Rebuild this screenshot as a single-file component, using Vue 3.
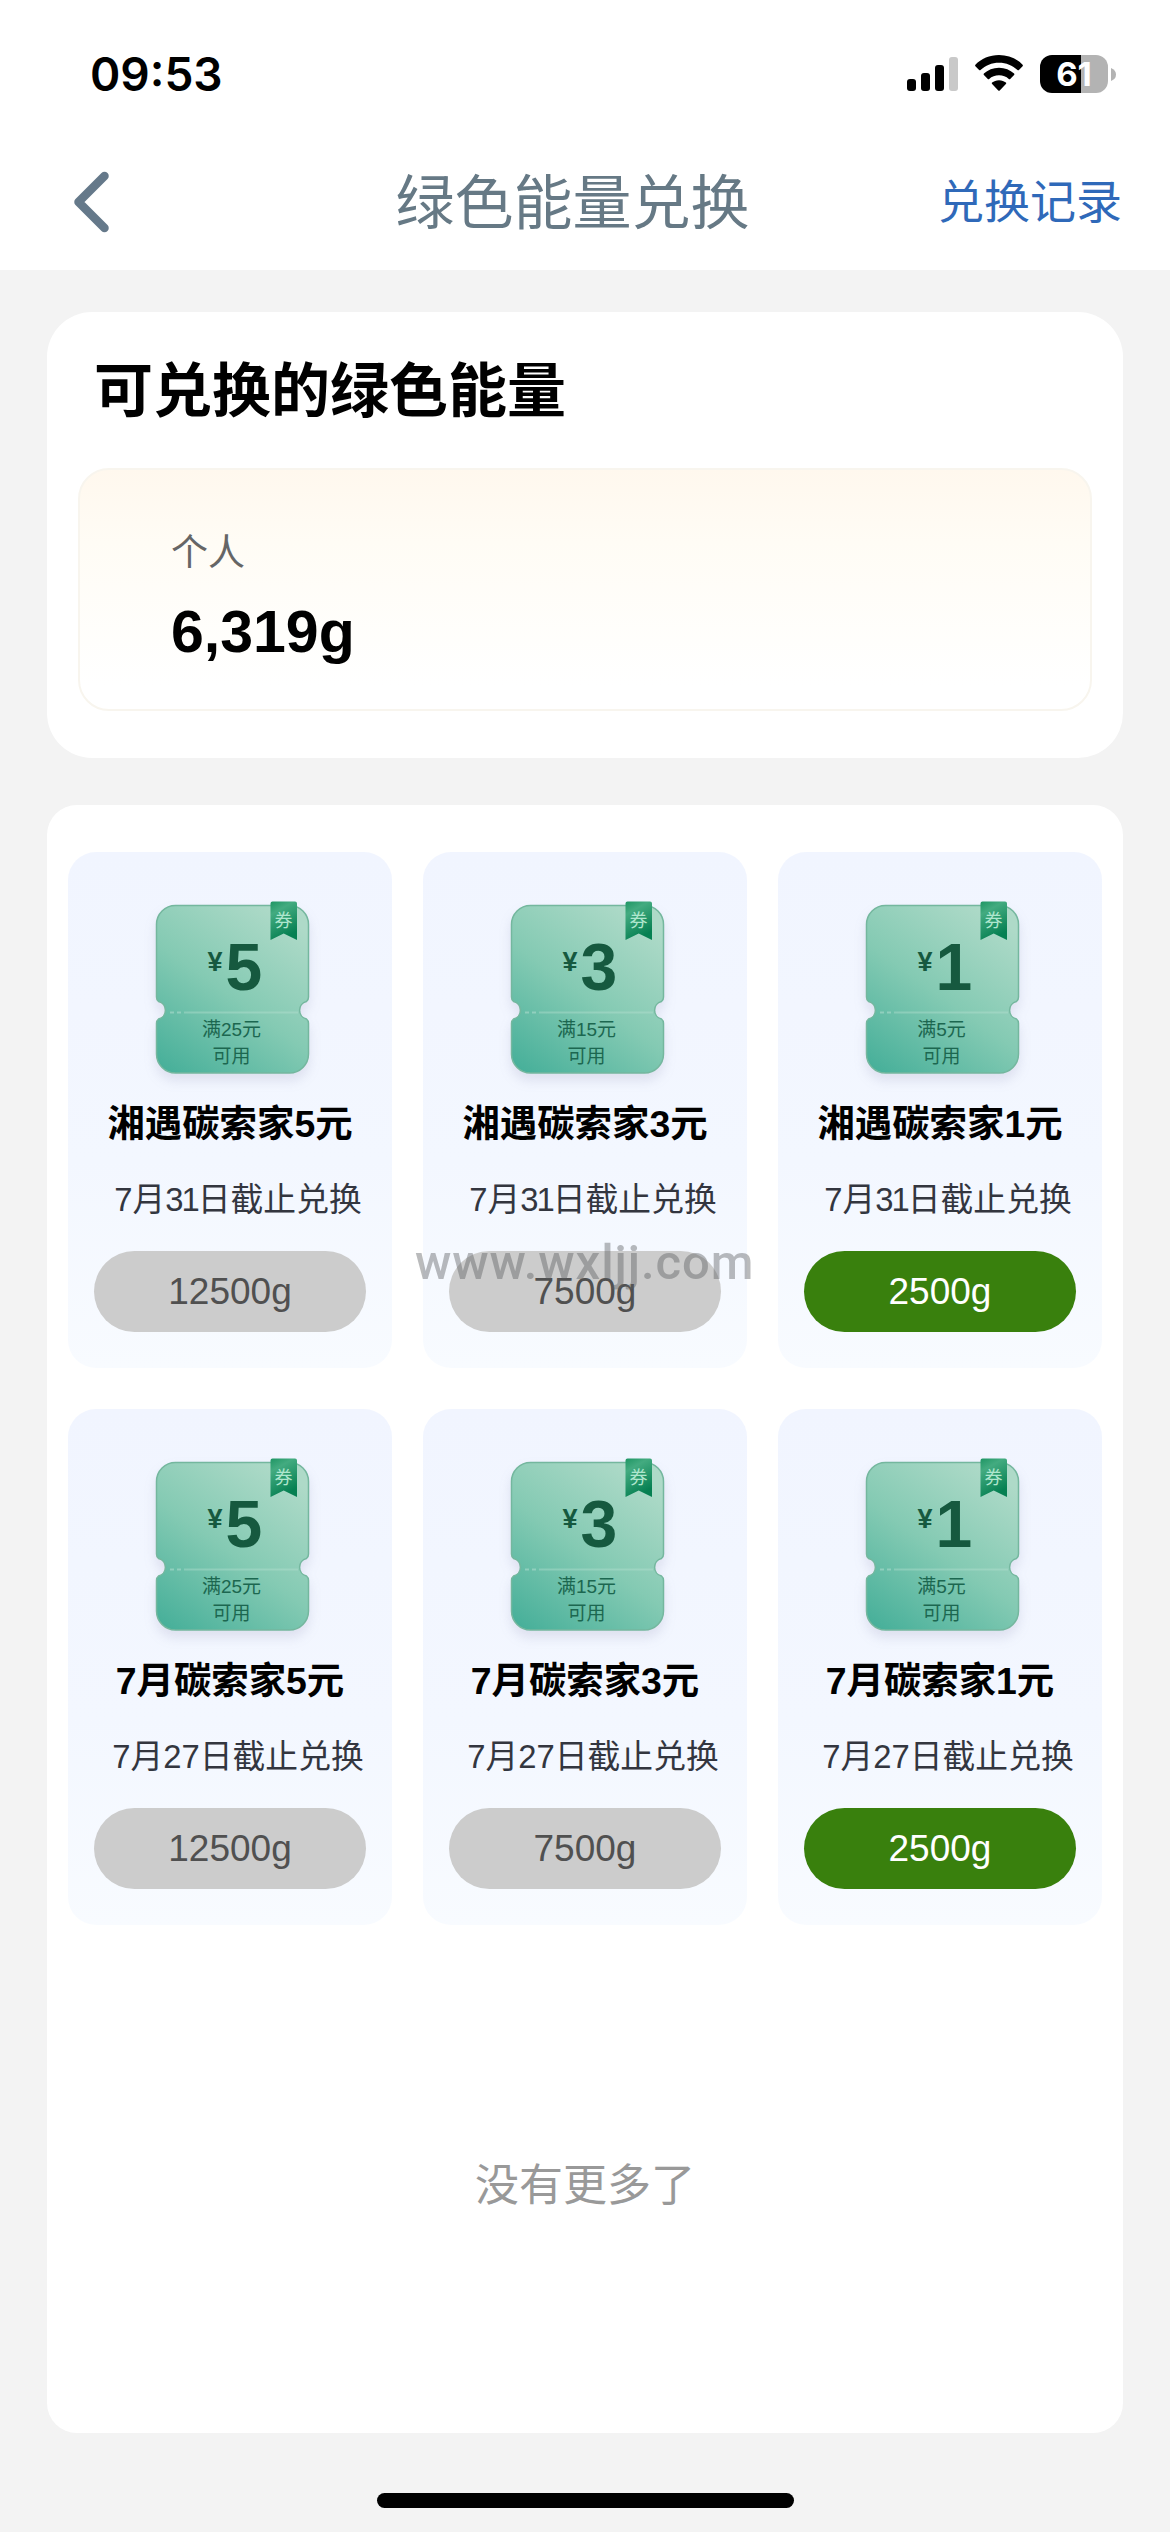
<script setup>
const coupons = [
  { name: '湘遇碳索家5元', day: '31', value: 5, min: 25, cost: 12500 },
  { name: '湘遇碳索家3元', day: '31', value: 3, min: 15, cost: 7500 },
  { name: '湘遇碳索家1元', day: '31', value: 1, min: 5, cost: 2500 },
  { name: '7月碳索家5元', day: '27', value: 5, min: 25, cost: 12500 },
  { name: '7月碳索家3元', day: '27', value: 3, min: 15, cost: 7500 },
  { name: '7月碳索家1元', day: '27', value: 1, min: 5, cost: 2500 },
]
const balance = 6319
</script>

<template>
  <div class="page">
    <header class="header">
      <div class="status">
        <span class="time">09:53</span>
        <div class="indicators">
          <svg class="signal" width="51" height="34" viewBox="0 0 51 34">
            <rect x="0" y="22" width="9" height="12" rx="3" />
            <rect x="14" y="16" width="9" height="18" rx="3" />
            <rect x="28" y="8" width="9" height="26" rx="3" />
            <rect x="42" y="0" width="9" height="34" rx="3" fill="#c9c9c9" />
          </svg>
          <svg class="wifi" width="48" height="36" viewBox="0 0 48 36">
            <path d="M24 0C33.300 0 41.800 3.700 47.600 9.700Q48.300 10.500 47.600 11.200L43.900 15Q43.200 15.600 42.500 15C37.600 10.300 31.200 7.700 24 7.700S10.400 10.300 5.500 15Q4.800 15.600 4.100 15L.4 11.200Q-.3 10.500 .4 9.700C6.200 3.700 14.700 0 24 0Z" />
            <path d="M24 12.700C29.900 12.700 35.200 14.900 39.100 18.600Q39.800 19.300 39.100 20L35.200 23.900Q34.500 24.500 33.800 23.900C31.200 21.500 27.800 20.200 24 20.200S16.800 21.500 14.200 23.900Q13.500 24.500 12.800 23.900L8.900 20Q8.200 19.300 8.900 18.600C12.800 14.900 18.100 12.700 24 12.700Z" />
            <path d="M24 25.200C26.800 25.200 29.200 26.100 30.900 27.600Q31.600 28.300 30.900 29L24.700 35.500Q24 36.200 23.300 35.500L17.100 29Q16.400 28.300 17.100 27.600C18.800 26.100 21.200 25.200 24 25.200Z" />
          </svg>
          <div class="battery">
            <div class="cell">61</div>
            <svg width="5" height="13" viewBox="0 0 5 13"><path d="M0 0Q5 2 5 6.500T0 13Z" fill="#b3b3b3" /></svg>
          </div>
        </div>
      </div>
      <nav class="nav">
        <svg class="back" width="44" height="70" viewBox="0 0 44 70">
          <path d="M35.500 9L9.500 35L35.500 61" fill="none" stroke="#65798a" stroke-width="8.500" stroke-linecap="round" stroke-linejoin="round" />
        </svg>
        <h1>绿色能量兑换</h1>
        <a>兑换记录</a>
      </nav>
    </header>

    <section class="energy">
      <h2>可兑换的绿色能量</h2>
      <div class="account">
        <span class="who">个人</span>
        <strong>{{ balance.toLocaleString('en-US') }}g</strong>
      </div>
    </section>

    <section class="list">
      <div class="grid">
        <article v-for="(c, i) in coupons" :key="i" class="coupon">
          <div class="ticket">
            <svg class="shape" width="193" height="208" viewBox="-20 -10 193 208">
              <defs>
                <linearGradient :id="'tk' + i" x1="0.1" y1="1" x2="0.75" y2="0">
                  <stop offset="0" stop-color="#48b09a" />
                  <stop offset="0.5" stop-color="#84cab3" />
                  <stop offset="1" stop-color="#aedac8" />
                </linearGradient>
                <linearGradient :id="'rb' + i" x1="0" y1="0" x2="0.4" y2="1">
                  <stop offset="0" stop-color="#1f9664" />
                  <stop offset="0.3" stop-color="#43ab80" />
                  <stop offset="1" stop-color="#068052" />
                </linearGradient>
              </defs>
              <path class="body" :fill="'url(#tk' + i + ')'" d="M19.500 .5H133.500A19 19 0 0 1 152.500 19.500V92Q152.500 95 150.500 96.500A9 9 0 0 0 150.500 114Q152.500 115.500 152.500 118.500V149A19 19 0 0 1 133.500 168H19.500A19 19 0 0 1 .5 149V118.500Q.5 115.500 2.500 114A9 9 0 0 0 2.500 96.500Q.5 95 .5 92V19.500A19 19 0 0 1 19.500 .5Z" />
              <path d="M14 107.500H26" stroke="#b9e2d3" stroke-opacity=".5" stroke-width="2" stroke-dasharray="4 3" />
              <path d="M28 107.500H142" stroke="#b9e2d3" stroke-opacity=".4" stroke-width="2" />
              <path :fill="'url(#rb' + i + ')'" d="M116.500 -3.500H139Q141 -3.500 141 -1.500V35L127.700 28.500L114.500 35V-1.500Q114.500 -3.500 116.500 -3.500Z" />
            </svg>
            <span class="mark">券</span>
            <div class="price"><small>¥</small><b>{{ c.value }}</b></div>
            <div class="rule">满{{ c.min }}元<br>可用</div>
          </div>
          <h3>{{ c.name }}</h3>
          <p class="date">7月<span :class="{ tight: c.day === '31' }">{{ c.day }}</span>日截止兑换</p>
          <button :class="{ active: c.cost <= balance }">{{ c.cost }}g</button>
        </article>
      </div>
      <p class="end">没有更多了</p>
      <span class="watermark">www.wxljj.com</span>
    </section>

    <div class="home"></div>
  </div>
</template>

<style>
body {
  margin: 0;
  background: #f3f3f3;
}
</style>

<style scoped>
.page {
  width: 1170px;
  height: 2532px;
  display: flex;
  flex-direction: column;
  overflow: hidden;
  background: #f3f3f3;
  font-family: "Liberation Sans", "Noto Sans CJK SC", sans-serif;
}
h1, h2, h3, p { margin: 0; }
svg { display: block; flex: none; }

.header {
  height: 270px;
  flex: none;
  background: #fff;
}
.status {
  height: 148px;
  display: flex;
  justify-content: space-between;
  padding: 0 54px 0 90px;
}
.time {
  font: 600 46px/149px Inter, sans-serif;
  letter-spacing: 0;
}
.indicators {
  display: flex;
  align-items: center;
  height: 148px;
}
.wifi { margin: -2px 17px 0; }
.battery {
  display: flex;
  align-items: center;
  gap: 3px;
}
.cell {
  width: 68px;
  height: 38px;
  border-radius: 12px;
  background: linear-gradient(90deg, #000 0 41px, #b3b3b3 41px);
  color: #fff;
  font: 700 33px/38px Inter, sans-serif;
  text-align: center;
}
.nav {
  height: 107px;
  display: grid;
  grid-template-columns: 320px 1fr 320px;
  align-items: center;
}
.back { margin-left: 69px; }
.nav h1 {
  width: 505px;
  padding-top: 5px;
  font-size: 59px;
  font-weight: 400;
  line-height: 102px;
  color: #667985;
  text-align: center;
}
.nav a {
  padding: 0 48px 7px 0;
  font-size: 46px;
  color: #2f69b9;
  text-align: right;
}

.energy {
  box-sizing: border-box;
  height: 446px;
  flex: none;
  margin: 42px 47px 0;
  padding: 38px 31px 0;
  border-radius: 45px;
  background: #fff;
}
.energy h2 {
  padding-left: 16px;
  font-size: 59px;
  line-height: 84px;
}
.account {
  box-sizing: border-box;
  height: 243px;
  margin-top: 34px;
  padding: 56px 0 0 91px;
  border: 2px solid #f8f5ee;
  border-radius: 31px;
  background: linear-gradient(#fff8ee, #fffcf5 30%, #fff 90%);
  display: flex;
  flex-direction: column;
}
.who {
  font-size: 37px;
  line-height: 56px;
  color: #666;
}
.account strong {
  margin-top: 17px;
  font-size: 59px;
  line-height: 66px;
}

.list {
  position: relative;
  box-sizing: border-box;
  height: 1628px;
  flex: none;
  margin: 47px 47px 0;
  padding: 47px 21px 0;
  border-radius: 30px;
  background: #fff;
}
.grid {
  display: grid;
  grid-template-columns: repeat(3, 324px);
  gap: 41px 31px;
}
.coupon {
  height: 516px;
  border-radius: 28px;
  background: linear-gradient(#f1f5ff, #f3f7ff 60%, #f8fbff);
  display: flex;
  flex-direction: column;
  align-items: center;
}
.ticket {
  position: relative;
  width: 153px;
  height: 168px;
  margin: 53px 0 0 4px;
  color: #16593f;
}
.shape {
  position: absolute;
  left: -20px;
  top: -10px;
}
.body {
  stroke: #74b79e;
  stroke-width: 1.5;
  filter: drop-shadow(0 7px 6px rgba(90, 90, 140, 0.14));
}
.mark {
  position: absolute;
  left: 115px;
  top: 3px;
  width: 26px;
  font-size: 18px;
  line-height: 26px;
  color: #aee6cd;
  text-align: center;
}
.price {
  position: relative;
  display: flex;
  align-items: flex-start;
  padding: 29px 0 0 52px;
  height: 80px;
}
.price small {
  margin-top: 12px;
  font-size: 27px;
  font-weight: 700;
  line-height: 32px;
  width: 18px;
}
.price b {
  font-size: 66px;
  line-height: 66px;
}
.rule {
  position: relative;
  margin-left: -1px;
  padding-top: 2px;
  font-size: 19px;
  line-height: 27px;
  color: #1c6750;
  text-align: center;
}
.coupon h3 {
  margin-top: 23px;
  font-size: 37.400px;
  line-height: 56px;
  white-space: nowrap;
}
.date {
  margin: 24px 0 0 16px;
  font-size: 32.800px;
  line-height: 48px;
  color: #33363f;
  white-space: nowrap;
}
.tight { letter-spacing: -2px; }
.coupon button {
  width: 272px;
  height: 81px;
  margin-top: 27px;
  padding: 0;
  border: 0;
  border-radius: 41px;
  background: #ccc;
  color: #505050;
  font: 37px/82px "Liberation Sans", sans-serif;
}
.coupon button.active {
  background: #39800d;
  color: #fff;
}
.end {
  margin-top: 228px;
  font-size: 44px;
  line-height: 66px;
  color: #999;
  text-align: center;
}
.watermark {
  position: absolute;
  left: 368px;
  top: 430px;
  font: 500 49px/56px Roboto, sans-serif;
  letter-spacing: 0.9px;
  color: rgba(90, 92, 96, 0.42);
}
.home {
  width: 417px;
  height: 15px;
  margin: 60px auto 0;
  border-radius: 8px;
  background: #000;
}
</style>
